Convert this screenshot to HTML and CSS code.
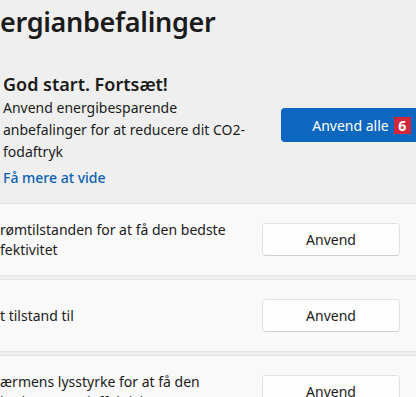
FILE: index.html
```html
<!DOCTYPE html>
<html lang="da">
<head>
    <meta charset="UTF-8">
    <meta name="viewport" content="width=device-width, initial-scale=1.0">
    <title>Energianbefalinger</title>
    <link rel="stylesheet" href="styles.css">
</head>
<body>
    <div class="page">
        <h1 class="title">ergianbefalinger</h1>

        <div class="intro">
            <div class="intro-text">
                <h2>God start. Fortsæt!</h2>
                <p>Anvend energibesparende anbefalinger for at reducere dit CO2-fodaftryk</p>
                <a href="#" class="learn-more">Få mere at vide</a>
            </div>
            <button class="apply-all">Anvend alle <span class="badge">6</span></button>
        </div>

        <div class="list">
            <div class="row">
                <p class="row-text">rømtilstanden for at få den bedste<br>fektivitet</p>
                <button class="apply">Anvend</button>
            </div>
            <div class="row">
                <p class="row-text">t tilstand til</p>
                <button class="apply">Anvend</button>
            </div>
            <div class="row">
                <p class="row-text">ærmens lysstyrke for at få den<br>bedste energieffektivitet</p>
                <button class="apply">Anvend</button>
            </div>
        </div>
    </div>
</body>
</html>
```

FILE: styles.css
```css
html, body {
    margin: 0;
    padding: 0;
    overflow: hidden;
}
body {
    font-family: 'Noto Sans', 'Open Sans', sans-serif;
    background-color: #efefef;
    color: #1b1b1b;
}
.page {
    width: 442px;
    padding-top: 2px;
}
.title {
    font-size: 27px;
    font-weight: 600;
    line-height: 40px;
    margin: 0;
    letter-spacing: -0.3px;
}
.intro {
    display: flex;
    justify-content: space-between;
    align-items: flex-start;
    padding: 30px 0 14px 3px;
}
.intro-text {
    width: 250px;
}
.intro-text h2 {
    font-size: 18px;
    font-weight: 600;
    line-height: 24px;
    margin: 0 0 1px;
}
.intro-text p {
    font-size: 14px;
    line-height: 22px;
    margin: 0 0 3px;
}
.learn-more {
    color: #0a62b5;
    font-size: 14px;
    font-weight: 500;
    text-decoration: none;
    line-height: 22px;
}
.apply-all {
    width: 161px;
    height: 34px;
    margin-top: 36px;
    background-color: #0e67be;
    color: #ffffff;
    border: none;
    border-radius: 4px;
    font-family: inherit;
    font-size: 14px;
    display: flex;
    align-items: center;
    justify-content: center;
    gap: 5px;
    padding: 0;
}
.badge {
    background-color: #d2273a;
    color: #ffffff;
    font-weight: 700;
    font-size: 14px;
    width: 17px;
    height: 17px;
    line-height: 17px;
    text-align: center;
}
.list {
    display: flex;
    flex-direction: column;
    gap: 3px;
    width: 418px;
}
.row {
    display: flex;
    align-items: center;
    justify-content: space-between;
    height: 73px;
    box-sizing: border-box;
    background-color: #f9f9f9;
    border: 1px solid #e3e3e3;
    border-left: none;
    padding-right: 17px;
}
.row-text {
    font-size: 14px;
    line-height: 20px;
    margin: 0;
}
.apply {
    width: 138px;
    height: 33px;
    background-color: #fefefe;
    border: 1px solid #e2e2e2;
    border-bottom-color: #d0d0d0;
    border-radius: 4px;
    font-family: inherit;
    font-size: 14px;
    color: #1b1b1b;
    padding: 0;
}
```
